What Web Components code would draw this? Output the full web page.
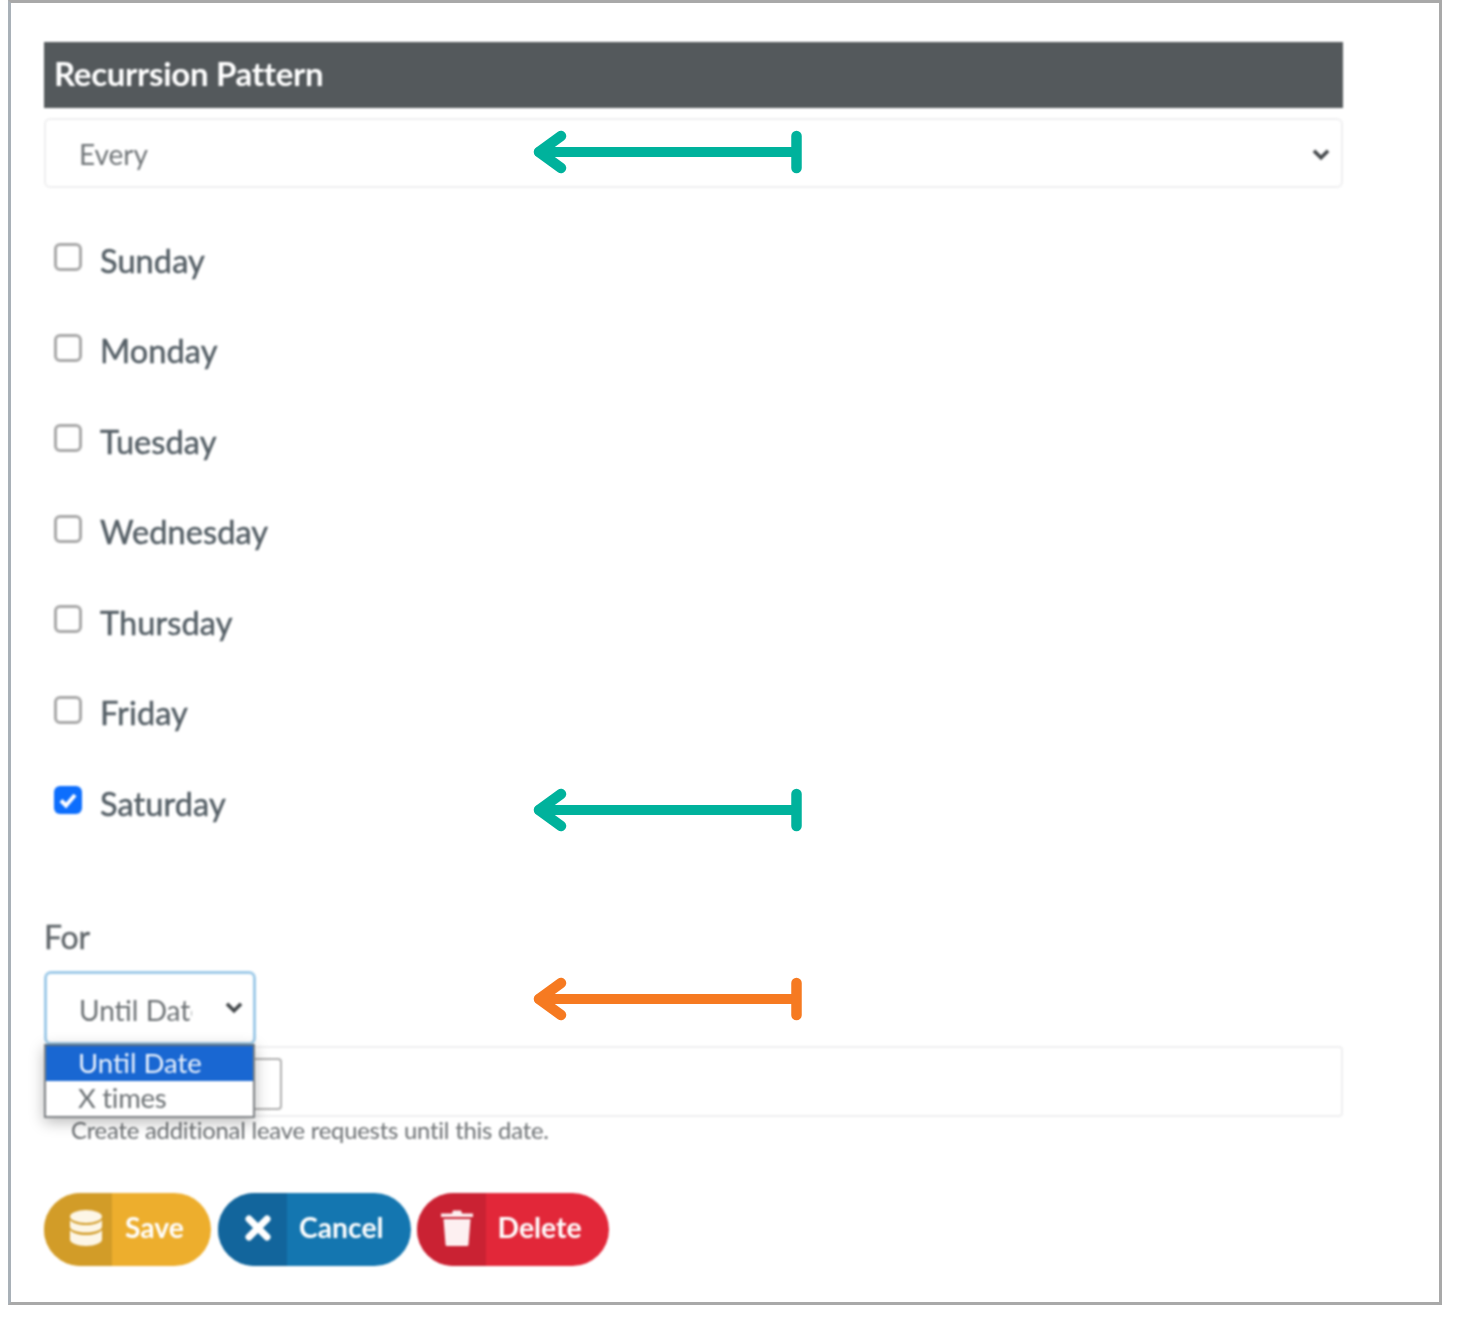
<!DOCTYPE html>
<html lang="en">
<head>
<meta charset="utf-8">
<title>Recurrsion Pattern</title>
<style>
html, body { margin: 0; background: #fff; }
body { font-family: Lato, "Liberation Sans", sans-serif; }
</style>
</head>
<body>
<leave-form></leave-form>

<script>
/* Define the page elements */
(function(){

    const chevron = `<svg width="20" height="13" viewBox="0 0 18 12"><path d="M2.5 2.5 9 9l6.500-6.500" fill="none" stroke="#45494c" stroke-width="3.400"/></svg>`;

    // Heading bar
    customElements.define('form-heading', class extends HTMLElement {
        constructor() {
            super();
            this.attachShadow({ mode: 'open' }).innerHTML = `
            <style>
            :host {
                display: flex;
                align-items: center;
                height: 66px;
                padding: 0 0 4px 10px;
                box-sizing: border-box;
                background: #54595c;
                color: #fff;
                font-size: 33px;
                font-weight: 700;
                letter-spacing: -0.3px;
            }
            </style>
            <slot></slot>`;
        }
    });

    // Wide select that shows one value
    customElements.define('pattern-select', class extends HTMLElement {
        constructor() {
            super();
            this.attachShadow({ mode: 'open' }).innerHTML = `
            <style>
            :host {
                display: flex;
                align-items: center;
                justify-content: space-between;
                box-sizing: border-box;
                height: 70px;
                padding: 2px 10px 0 33px;
                border: 2px solid #efeff0;
                border-radius: 6px;
                color: #6f7477;
                font-size: 28px;
            }
            </style>
            <slot></slot>${chevron}`;
        }
    });

    // One weekday row
    customElements.define('day-check', class extends HTMLElement {
        constructor() {
            super();
            const on = this.hasAttribute('checked');
            this.attachShadow({ mode: 'open' }).innerHTML = `
            <style>
            :host {
                display: flex;
                align-items: center;
                gap: 18px;
                height: 44px;
                padding-left: 10px;
                color: #566067;
                font-size: 32.500px;
                letter-spacing: 0.1px;
                -webkit-text-stroke: 0.5px #566067;
            }
            .box {
                box-sizing: border-box;
                width: 28px;
                height: 28px;
                margin-top: -6px;
                border: 3px solid #a8a8a8;
                border-radius: 6px;
                background: #fff;
            }
            .box.on { border: none; background: #0d6efd; }
            svg { display: block; }
            </style>
            <span class="box ${on ? 'on' : ''}">${on ? '<svg width="28" height="28" viewBox="0 0 28 28"><path d="M7 14.500l5 5 9-10.500" fill="none" stroke="#fff" stroke-width="4"/></svg>' : ''}</span>
            <slot></slot>`;
        }
    });

    // Small select with its list open
    customElements.define('for-select', class extends HTMLElement {
        constructor() {
            super();
            this.attachShadow({ mode: 'open' }).innerHTML = `
            <style>
            :host {
                display: block;
                position: relative;
                width: 212px;
                height: 74px;
                color: #6c7174;
                font-size: 27.500px;
            }
            .value {
                display: flex;
                align-items: center;
                justify-content: space-between;
                box-sizing: border-box;
                height: 74px;
                padding: 3px 9px 0 32px;
                border: 3px solid #9fcbe9;
                border-radius: 7px;
                background: #fff;
            }
            .clip { width: 113px; overflow: hidden; white-space: nowrap; font-size: 28px; }
            .value svg { margin-top: -5px; }
            .list {
                position: absolute;
                left: 0;
                top: 73px;
                box-sizing: border-box;
                width: 211px;
                height: 74px;
                border: 2px solid #7d8184;
                border-top-color: #5d7286;
                background: #fff;
                box-shadow: 0 4px 14px rgba(0,0,0,.28);
                z-index: 2;
            }
            .opt { height: 35px; line-height: 34px; padding-left: 32px; white-space: nowrap; }
            .opt.sel { background: #1967d2; color: #eaf2fd; }
            </style>
            <div class="value"><span class="clip">Until Date</span>${chevron}</div>
            <div class="list">
                <div class="opt sel">Until Date</div>
                <div class="opt" style="letter-spacing:-0.3px">X times</div>
            </div>`;
        }
    });

    // Date field row behind the open list
    customElements.define('date-field', class extends HTMLElement {
        constructor() {
            super();
            this.attachShadow({ mode: 'open' }).innerHTML = `
            <style>
            :host {
                display: block;
                box-sizing: border-box;
                height: 71px;
                padding: 10px 0 0 27px;
                border: 2px solid #efeff0;
                border-radius: 4px;
            }
            .inner {
                box-sizing: border-box;
                width: 209px;
                height: 52px;
                border: 2px solid #b0b0b0;
                border-radius: 4px;
            }
            </style>
            <div class="inner"></div>`;
        }
    });

    // Pill button with a darker icon section
    customElements.define('action-button', class extends HTMLElement {
        constructor() {
            super();
            this.attachShadow({ mode: 'open' }).innerHTML = `
            <style>
            :host {
                display: inline-flex;
                align-items: stretch;
                height: 73px;
                border-radius: 37px;
                overflow: hidden;
                background: var(--bg);
                color: #fff;
                font-size: 28.300px;
                font-weight: 700;
            }
            .icon {
                display: flex;
                align-items: center;
                justify-content: center;
                box-sizing: border-box;
                width: var(--icon-w);
                padding: 0 0 3px 12px;
                background: var(--dark);
            }
            .text { display: flex; align-items: center; padding: 0 27px 5px var(--pad, 13px); }
            </style>
            <span class="icon"><slot name="icon"></slot></span>
            <span class="text"><slot></slot></span>`;
        }
    });

    // Annotation arrow, points left and ends in a bar
    customElements.define('note-arrow', class extends HTMLElement {
        constructor() {
            super();
            const c = this.getAttribute('color');
            this.attachShadow({ mode: 'open' }).innerHTML = `
            <style>
            :host {
                position: absolute;
                left: 521px;
                width: 272px;
                height: 44px;
                z-index: 5;
            }
            svg { display: block; }
            </style>
            <svg width="272" height="44" viewBox="0 0 272 44" fill="none" stroke="${c}" stroke-linecap="round" stroke-linejoin="round">
                <path d="M7 22H264" stroke-width="10"/>
                <path d="M29 6 7 22 29 38" stroke-width="10.500"/>
                <path d="M264.500 6V38" stroke-width="10.500"/>
            </svg>`;
        }
    });

    // The whole framed form
    customElements.define('leave-form', class extends HTMLElement {
        constructor() {
            super();
            this.attachShadow({ mode: 'open' }).innerHTML = `
            <style>
            :host {
                display: block;
                position: relative;
                box-sizing: border-box;
                width: 1434px;
                height: 1305px;
                margin-left: 8px;
                border: 3px solid #a9a9a9;
                border-left-color: #a9b1b8;
            }
            .content {
                display: flex;
                flex-direction: column;
                box-sizing: border-box;
                width: 1332px;
                padding: 39px 0 0 33px;
                filter: blur(0.85px);
            }
            .days {
                display: flex;
                flex-direction: column;
                gap: 46.500px;
                margin-top: 50px;
            }
            .for-label {
                margin-top: 92px;
                height: 46px;
                color: #5f6569;
                font-size: 32px;
                letter-spacing: -0.2px;
                -webkit-text-stroke: 0.3px #5f6569;
            }
            .for-wrap { margin-top: 8px; height: 75px; position: relative; z-index: 2; }
            .help {
                margin: 0 0 0 27px;
                height: 26px;
                line-height: 26px;
                color: #6c7073;
                font-size: 23.800px;
                letter-spacing: -0.2px;
            }
            .buttons { display: flex; gap: 6px; margin-top: 50px; }
            svg { display: block; }
            select-gap { display: block; height: 10px; }
            </style>
            <div class="content">
                <form-heading>Recurrsion Pattern</form-heading>
                <select-gap></select-gap>
                <pattern-select>Every</pattern-select>
                <div class="days">
                    <day-check>Sunday</day-check>
                    <day-check>Monday</day-check>
                    <day-check>Tuesday</day-check>
                    <day-check>Wednesday</day-check>
                    <day-check>Thursday</day-check>
                    <day-check>Friday</day-check>
                    <day-check checked>Saturday</day-check>
                </div>
                <div class="for-label">For</div>
                <div class="for-wrap"><for-select></for-select></div>
                <date-field></date-field>
                <div class="help">Create additional leave requests until this date.</div>
                <div class="buttons">
                    <action-button style="--bg:#edae2d;--dark:#d29c28;--icon-w:68px;margin-right:1px">
                        <svg slot="icon" style="margin-left:3px" width="32" height="36" viewBox="0 0 32 36" fill="#fdf6e6">
                            <ellipse cx="16" cy="6.500" rx="16" ry="6.500"/>
                            <path d="M0 10c3 3.500 9 5 16 5s13-1.500 16-5v6.500c0 3.500-7 6-16 6s-16-2.500-16-6z"/>
                            <path d="M0 20c3 3.500 9 5 16 5s13-1.500 16-5v9.500c0 3.500-7 6.500-16 6.500s-16-3-16-6.500z"/>
                        </svg>
                        Save
                    </action-button>
                    <action-button style="--bg:#1476b0;--dark:#12659c;--icon-w:69px;--pad:12px">
                        <svg slot="icon" width="26" height="26" viewBox="0 0 26 26"><path d="M4 4 22 22M22 4 4 22" stroke="#fff" stroke-width="7" stroke-linecap="round"/></svg>
                        Cancel
                    </action-button>
                    <action-button style="--bg:#e22739;--dark:#ca2233;--icon-w:69px;--pad:12px">
                        <svg slot="icon" width="32" height="36" viewBox="0 0 32 36" fill="#fdf0f1">
                            <path d="M0 3.500h11l1-3h8l1 3h11V7H0z"/>
                            <path d="M2.500 9h27l-2 25.500a1.500 1.500 0 0 1-1.500 1.500H6a1.500 1.500 0 0 1-1.500-1.500z"/>
                        </svg>
                        Delete
                    </action-button>
                </div>
            </div>
            <note-arrow color="#00b29c" style="top:127px"></note-arrow>
            <note-arrow color="#00b29c" style="top:785px"></note-arrow>
            <note-arrow color="#f67a21" style="top:974px"></note-arrow>`;
        }
    });

}) ();
</script>
</body>
</html>
